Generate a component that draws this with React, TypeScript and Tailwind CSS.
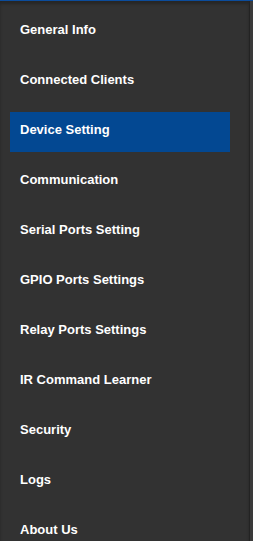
import React from 'react';

const items = [
  'General Info',
  'Connected Clients',
  'Device Setting',
  'Communication',
  'Serial Ports Setting',
  'GPIO Ports Settings',
  'Relay Ports Settings',
  'IR Command Learner',
  'Security',
  'Logs',
  'About Us',
];

export default function App() {
  const active = 'Device Setting';

  return (
    <div
      className="flex h-[541px] w-[253px] overflow-hidden bg-[#323232] border-t border-[#0b4c9c]"
      style={{ fontFamily: '"Liberation Sans", Arial, sans-serif' }}
    >
      {/* Menu */}
      <div className="flex-1 flex flex-col pt-[11px] pl-[10px] pr-[19px] shadow-[inset_0_3px_3px_rgba(0,0,0,0.25)]">
        {items.map((label) => (
          <div
            key={label}
            className={
              'h-[40px] shrink-0 mb-[10px] px-[10px] pt-[10px] text-[13px] leading-[16px] font-bold text-white ' +
              (label === active ? 'bg-[#034892]' : '')
            }
          >
            {label}
          </div>
        ))}
      </div>

      {/* Right edge */}
      <div className="w-[4px] shrink-0 border-l border-[#232323] bg-[#3a3a3a]" />
    </div>
  );
}
